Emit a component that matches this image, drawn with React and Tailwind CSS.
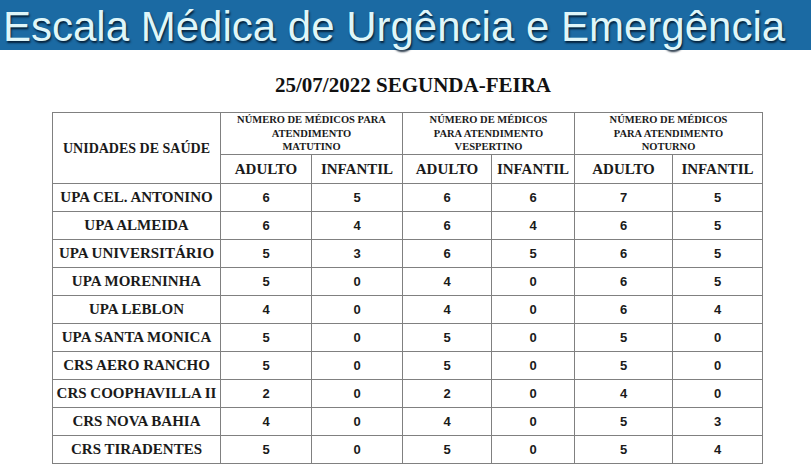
import React from "react";

const rows = [
  ["UPA CEL. ANTONINO", 6, 5, 6, 6, 7, 5],
  ["UPA ALMEIDA", 6, 4, 6, 4, 6, 5],
  ["UPA UNIVERSITÁRIO", 5, 3, 6, 5, 6, 5],
  ["UPA MORENINHA", 5, 0, 4, 0, 6, 5],
  ["UPA LEBLON", 4, 0, 4, 0, 6, 4],
  ["UPA SANTA MONICA", 5, 0, 5, 0, 5, 0],
  ["CRS AERO RANCHO", 5, 0, 5, 0, 5, 0],
  ["CRS COOPHAVILLA II", 2, 0, 2, 0, 4, 0],
  ["CRS NOVA BAHIA", 4, 0, 4, 0, 5, 3],
  ["CRS TIRADENTES", 5, 0, 5, 0, 5, 4],
];

const serif = "font-['Liberation_Serif','Times_New_Roman',serif]";
const sans = "font-['Liberation_Sans',Arial,sans-serif]";
const cell = "border border-[#808080]";

const App = () => {
  return (
    <div className="w-[811px] h-[470px] bg-white overflow-hidden">
      <div className="h-[50px] bg-[#1b6aa3] flex items-center pl-[3px] pt-[3px]">
        <h1
          className={`${sans} text-[42px] leading-none text-[#dff6f9] whitespace-nowrap [text-shadow:1px_2px_2px_rgba(0,20,40,0.85)]`}
        >
          Escala Médica de Urgência e Emergência
        </h1>
      </div>

      <h2 className={`${serif} font-bold text-[21px] leading-[26px] text-[#111] text-center mt-[22px] mb-[14px] pl-[15px]`}>
        25/07/2022 SEGUNDA-FEIRA
      </h2>

      <table className="ml-[52px] w-[710px] border-collapse table-fixed text-[#1a1a1a]">
        <colgroup>
          <col className="w-[168px]" />
          <col className="w-[91px]" />
          <col className="w-[91px]" />
          <col className="w-[89px]" />
          <col className="w-[83px]" />
          <col className="w-[98px]" />
          <col className="w-[90px]" />
        </colgroup>
        <thead className={`${serif} font-bold`}>
          <tr className="h-[42px]">
            <th rowSpan={2} className={`${cell} text-[14px] text-center whitespace-nowrap`}>
              UNIDADES DE SAÚDE
            </th>
            <th colSpan={2} className={`${cell} text-[10.5px] leading-[13.5px] align-top`}>
              NÚMERO DE MÉDICOS PARA
              <br />
              ATENDIMENTO
              <br />
              MATUTINO
            </th>
            <th colSpan={2} className={`${cell} text-[10.5px] leading-[13.5px] align-top`}>
              NÚMERO DE MÉDICOS
              <br />
              PARA ATENDIMENTO
              <br />
              VESPERTINO
            </th>
            <th colSpan={2} className={`${cell} text-[10.5px] leading-[13.5px] align-top`}>
              NÚMERO DE MÉDICOS
              <br />
              PARA ATENDIMENTO
              <br />
              NOTURNO
            </th>
          </tr>
          <tr className="h-[29px] text-[15px]">
            <th className={cell}>ADULTO</th>
            <th className={cell}>INFANTIL</th>
            <th className={cell}>ADULTO</th>
            <th className={cell}>INFANTIL</th>
            <th className={cell}>ADULTO</th>
            <th className={cell}>INFANTIL</th>
          </tr>
        </thead>
        <tbody>
          {rows.map((row) => (
            <tr key={row[0]} className="h-[28px]">
              <td className={`${cell} ${serif} font-bold text-[15px] text-center whitespace-nowrap`}>
                {row[0]}
              </td>
              {row.slice(1).map((n, i) => (
                <td key={i} className={`${cell} ${sans} font-bold text-[13px] text-center`}>
                  {n}
                </td>
              ))}
            </tr>
          ))}
        </tbody>
      </table>
    </div>
  );
};

export default App;
